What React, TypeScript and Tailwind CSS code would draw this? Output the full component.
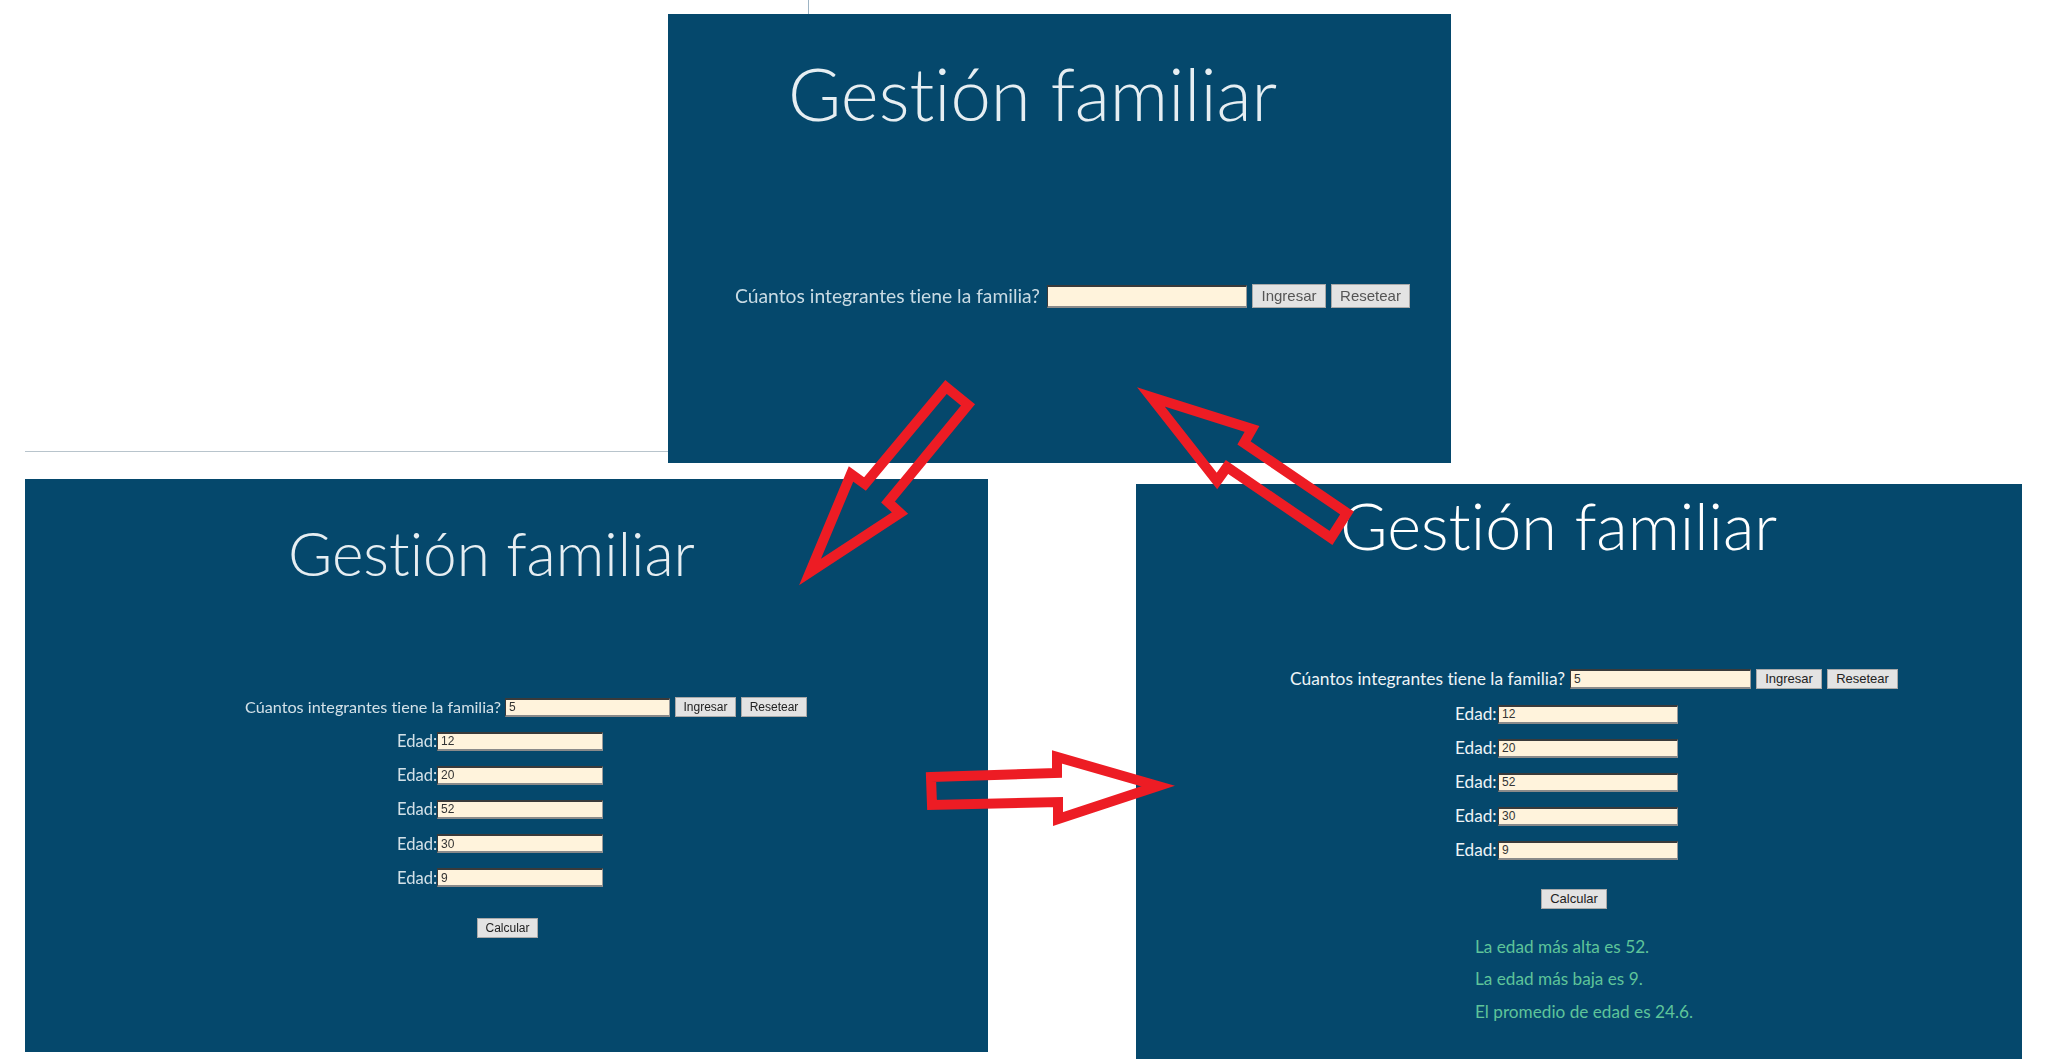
import type { ReactNode } from 'react';

const edades = ['12', '20', '52', '30', '9'];

function Btn({ className, children }: { className: string; children: ReactNode }) {
  return (
    <button className={`flex shrink-0 items-center justify-center border border-[#a9a9a9] bg-[#e3e3e3] font-['Liberation_Sans',sans-serif] text-[#222] ${className}`}>
      {children}
    </button>
  );
}

function Campo({ value, className }: { value: string; className: string }) {
  return (
    <input
      readOnly
      value={value}
      className={`shrink-0 border border-t-2 border-[#3a3a3a] border-b-2 border-b-[#8a8a8a] border-r-[#9a9a9a] bg-[#fff3dc] pl-[3px] font-['Liberation_Sans',sans-serif] text-[#333] outline-none ${className}`}
    />
  );
}

function Flechas() {
  return (
    <svg className="pointer-events-none absolute top-0 left-0 z-10" width="2046" height="1059" fill="none" stroke="#ed1c24" strokeWidth="10" strokeMiterlimit="10">
      <polygon points="946,387 968,405 888,502 900,513 810,572 851,474 865,484" />
      <polygon points="1151,397 1252,429 1244,443 1347,513 1331,538 1227,467 1217,481" />
      <polygon points="931,777 1057,773 1057,757 1158,786 1058,819 1058,802 932,805" />
    </svg>
  );
}

export default function App() {
  return (
    <div className="relative h-[1059px] w-[2046px] overflow-hidden bg-white font-['Lato',sans-serif] [font-variant-ligatures:none]">
      <div className="absolute top-0 left-[808px] h-[14px] w-px bg-[#9db4c4]" />
      <div className="absolute top-[451px] left-[25px] h-px w-[643px] bg-[#b8c4cc]" />

      {/* pantalla inicial */}
      <section className="absolute top-[14px] left-[668px] h-[449px] w-[783px] bg-[#05486c] pt-[29px] blur-[0.6px]">
        <h1 className="ml-[120px] h-[100px] whitespace-nowrap text-[72.5px] leading-[100px] font-light text-[#e6eef2]">Gestión familiar</h1>
        <div className="mt-[141px] ml-[67px] flex h-[24px] items-center">
          <label className="w-[312px] whitespace-nowrap text-[19.3px] text-[#c9dbe4]">Cúantos integrantes tiene la familia?</label>
          <Campo value="" className="h-[23px] w-[200px] text-[13px]" />
          <Btn className="ml-[5px] h-[24px] w-[74px] text-[15px] text-[#555]">Ingresar</Btn>
          <Btn className="ml-[5px] h-[24px] w-[79px] text-[15px] text-[#555]">Resetear</Btn>
        </div>
      </section>

      {/* con las edades cargadas */}
      <section className="absolute top-[479px] left-[25px] h-[573px] w-[963px] bg-[#05486c] pt-[34px] blur-[0.4px]">
        <h1 className="ml-[263px] h-[80px] whitespace-nowrap text-[60.3px] leading-[80px] font-light text-[#e6eef2]">Gestión familiar</h1>
        <div className="mt-[104px] ml-[220px] flex h-[20px] items-center">
          <label className="w-[260px] whitespace-nowrap text-[16.2px] text-[#d3e1e8]">Cúantos integrantes tiene la familia?</label>
          <Campo value="5" className="h-[19px] w-[165px] text-[12px]" />
          <Btn className="ml-[5px] h-[20px] w-[61px] text-[12px]">Ingresar</Btn>
          <Btn className="ml-[5px] h-[20px] w-[66px] text-[12px]">Resetear</Btn>
        </div>
        <div className="mt-[15px] ml-[372px] flex flex-col gap-[16.2px]">
          {edades.map((edad, i) => (
            <div key={i} className="flex h-[18px] items-center">
              <label className="w-[40px] whitespace-nowrap text-[16.6px] leading-[18px] text-[#d3e1e8]">Edad:</label>
              <Campo value={edad} className="h-[19px] w-[166px] text-[12px]" />
            </div>
          ))}
        </div>
        <Btn className="mt-[31px] ml-[452px] h-[20px] w-[61px] text-[12px]">Calcular</Btn>
      </section>

      {/* con el resultado */}
      <section className="absolute top-[484px] left-[1136px] h-[575px] w-[886px] bg-[#05486c] pt-[1px]">
        <h1 className="ml-[204px] h-[80px] whitespace-nowrap text-[64.8px] leading-[80px] font-light text-white">Gestión familiar</h1>
        <div className="mt-[104px] ml-[154px] flex h-[20px] items-center">
          <label className="w-[280px] whitespace-nowrap text-[17.4px] text-[#eef4f7]">Cúantos integrantes tiene la familia?</label>
          <Campo value="5" className="h-[20px] w-[181px] text-[12px]" />
          <Btn className="ml-[5px] h-[20px] w-[66px] text-[13px]">Ingresar</Btn>
          <Btn className="ml-[5px] h-[20px] w-[71px] text-[13px]">Resetear</Btn>
        </div>
        <div className="mt-[16px] ml-[319px] flex flex-col gap-[16px]">
          {edades.map((edad, i) => (
            <div key={i} className="flex h-[18px] items-center">
              <label className="w-[43px] whitespace-nowrap text-[17.2px] leading-[18px] text-[#eef4f7]">Edad:</label>
              <Campo value={edad} className="h-[19px] w-[180px] text-[12px]" />
            </div>
          ))}
        </div>
        <Btn className="mt-[30px] ml-[405px] h-[20px] w-[66px] text-[13px]">Calcular</Btn>
        <div className="mt-[28px] ml-[339px] flex flex-col gap-[12.3px] text-[17.2px] leading-[20px] text-[#5ec49a]">
          <p>La edad más alta es 52.</p>
          <p>La edad más baja es 9.</p>
          <p>El promedio de edad es 24.6.</p>
        </div>
      </section>

      <Flechas />
    </div>
  );
}
